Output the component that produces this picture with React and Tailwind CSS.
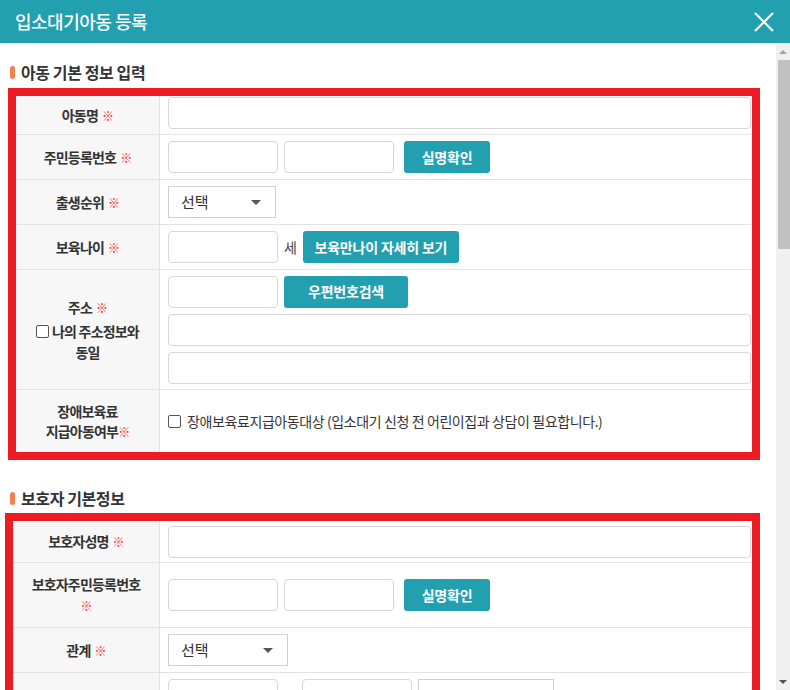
import React from "react";

const Req = () => <span className="ml-1 text-[12px] font-normal text-[#f22]">※</span>;

const Field = ({ className = "" }) => (
  <input
    type="text"
    className={"h-8 rounded-[4px] border border-[#d7d7d7] bg-white outline-none " + className}
  />
);

const Btn = ({ children, className = "" }) => (
  <button className={"h-8 rounded-[3px] bg-[#23a0b0] text-[14px] font-bold tracking-[-0.2px] text-white " + className}>
    {children}
  </button>
);

const Select = ({ className = "" }) => (
  <div className={"flex h-8 items-center justify-between border border-[#d0d0d0] bg-white pl-3 pr-[14px] text-[15px] text-[#333] " + className}>
    <span>선택</span>
    <span className="h-0 w-0 border-x-[5px] border-t-[5px] border-x-transparent border-t-[#555]" />
  </div>
);

const Row = ({ label, h, labelW = "w-[144px]", top = false, children }) => (
  <div className={"flex border-b border-[#e3e3e3] " + h}>
    <div className={"flex shrink-0 flex-col items-center justify-center border-r border-[#e3e3e3] bg-[#f7f7f7] text-center text-[14px] font-bold leading-[21px] tracking-[-0.8px] text-[#333] " + labelW}>
      {label}
    </div>
    <div className={"flex flex-1 gap-[6px] pl-2 pr-px " + (top ? "items-start pt-px" : "items-center")}>
      {children}
    </div>
  </div>
);

const Heading = ({ children, className = "" }) => (
  <div className={"flex h-[22px] items-center gap-[6px] pl-[10px] " + className}>
    <span className="h-[13px] w-[5px] rounded-full bg-[#f4804f]" />
    <span className="text-[16px] font-bold tracking-[-0.4px] text-[#333]">{children}</span>
  </div>
);

export default function App() {
  return (
    <div className="flex h-[690px] w-[790px] flex-col overflow-hidden bg-white font-['Noto_Sans_CJK_KR','Noto_Sans',sans-serif]">
      <div className="flex h-[43px] shrink-0 items-center justify-between bg-[#23a0b0] pl-[15px] pr-[16px]">
        <h1 className="text-[18px] font-medium tracking-[-0.5px] text-white">입소대기아동 등록</h1>
        <svg width="20" height="20" viewBox="0 0 20 20" className="mt-px">
          <path d="M1 1 L19 19 M19 1 L1 19" stroke="#fff" strokeWidth="2.2" />
        </svg>
      </div>

      <div className="flex min-h-0 flex-1">
        <div className="flex-1 overflow-hidden">
          <Heading className="mt-[18px] mb-[5px]">아동 기본 정보 입력</Heading>
          <div className="ml-2 w-[752px] border-8 border-[#ed1c24]">
            <Row label={<div>아동명<Req /></div>} h="h-[39px]" top>
              <Field className="w-full" />
            </Row>
            <Row label={<div>주민등록번호<Req /></div>} h="h-[45px]">
              <Field className="w-[110px]" />
              <Field className="w-[110px]" />
              <Btn className="ml-1 w-[86px]">실명확인</Btn>
            </Row>
            <Row label={<div>출생순위<Req /></div>} h="h-[45px]">
              <Select className="w-[108px]" />
            </Row>
            <Row label={<div>보육나이<Req /></div>} h="h-[45px]">
              <Field className="w-[110px]" />
              <span className="text-[14px] text-[#444]">세</span>
              <Btn className="w-[156px]">보육만나이 자세히 보기</Btn>
            </Row>
            <Row
              label={
                <>
                  <div>주소<Req /></div>
                  <div className="mt-[3px] flex items-center gap-[3px]">
                    <span className="h-[13px] w-[13px] rounded-[2px] border border-[#555] bg-white" />
                    나의 주소정보와
                  </div>
                  <div>동일</div>
                </>
              }
              h="h-[120px]"
            >
              <div className="flex w-full flex-col gap-[6px]">
                <div className="flex gap-[6px]">
                  <Field className="w-[110px]" />
                  <Btn className="w-[124px]">우편번호검색</Btn>
                </div>
                <Field className="w-full" />
                <Field className="w-full" />
              </div>
            </Row>
            <div className="flex h-[62px]">
              <div className="flex w-[144px] shrink-0 flex-col items-center justify-center border-r border-[#e3e3e3] bg-[#f7f7f7] text-center text-[14px] font-bold leading-[20px] tracking-[-0.8px] text-[#333]">
                <div>장애보육료</div>
                <div>지급아동여부<span className="text-[12px] font-normal text-[#f22]">※</span></div>
              </div>
              <div className="flex flex-1 items-center gap-[6px] pl-2 text-[14px] tracking-[-0.4px] text-[#333]">
                <span className="h-[13px] w-[13px] rounded-[2px] border border-[#555] bg-white" />
                장애보육료지급아동대상 (입소대기 신청 전 어린이집과 상담이 필요합니다.)
              </div>
            </div>
          </div>

          <Heading className="mt-[27px] mb-[4px]">보호자 기본정보</Heading>
          <div className="ml-[5px] w-[755px] border-8 border-[#ed1c24]">
            <Row label={<div>보호자성명<Req /></div>} h="h-[42px]" labelW="w-[147px]">
              <Field className="w-full" />
            </Row>
            <Row
              label={
                <>
                  <div>보호자주민등록번호</div>
                  <div className="text-[12px] font-normal text-[#f22]">※</div>
                </>
              }
              h="h-[65px]"
              labelW="w-[147px]"
            >
              <Field className="w-[110px]" />
              <Field className="w-[110px]" />
              <Btn className="ml-1 w-[86px]">실명확인</Btn>
            </Row>
            <Row label={<div>관계<Req /></div>} h="h-[45px]" labelW="w-[147px]">
              <Select className="w-[120px]" />
            </Row>
            <Row label={null} h="h-[45px]" labelW="w-[147px]">
              <Field className="w-[110px]" />
              <span className="w-[12px]" />
              <Field className="w-[110px]" />
              <div className="h-8 w-[136px] border border-[#d0d0d0]" />
            </Row>
          </div>
          <div className="h-10" />
        </div>

        <div className="flex w-[14px] shrink-0 flex-col bg-[#f0f0f0]">
          <div className="flex h-[17px] items-center justify-center">
            <span className="h-0 w-0 border-x-[4px] border-b-[4px] border-x-transparent border-b-[#a3a3a3]" />
          </div>
          <div className="ml-[2px] h-[189px] bg-[#c1c1c1]" />
          <div className="flex-1" />
          <div className="flex h-[17px] items-center justify-center">
            <span className="h-0 w-0 border-x-[4px] border-t-[4px] border-x-transparent border-t-[#505050]" />
          </div>
        </div>
      </div>
    </div>
  );
}
